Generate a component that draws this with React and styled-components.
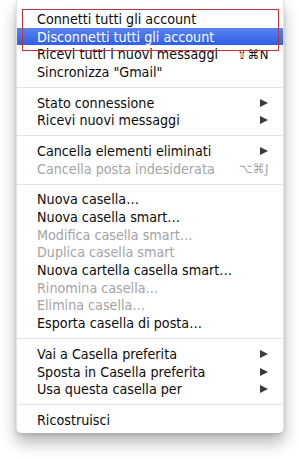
import React from "react";
import styled, { createGlobalStyle } from "styled-components";

const GlobalStyle = createGlobalStyle`
  html, body {
    margin: 0;
    padding: 0;
    background: #ffffff;
  }
  body {
    font-family: "Lucida Grande", "DejaVu Sans Condensed", "DejaVu Sans", sans-serif;
  }
`;

const groups = [
  [
    { label: "Connetti tutti gli account" },
    { label: "Disconnetti tutti gli account", active: true },
    { label: "Ricevi tutti i nuovi messaggi", shortcut: "⇧⌘N" },
    { label: 'Sincronizza "Gmail"' },
  ],
  [
    { label: "Stato connessione", submenu: true },
    { label: "Ricevi nuovi messaggi", submenu: true },
  ],
  [
    { label: "Cancella elementi eliminati", submenu: true },
    { label: "Cancella posta indesiderata", shortcut: "⌥⌘J", disabled: true },
  ],
  [
    { label: "Nuova casella…" },
    { label: "Nuova casella smart…" },
    { label: "Modifica casella smart…", disabled: true },
    { label: "Duplica casella smart", disabled: true },
    { label: "Nuova cartella casella smart…" },
    { label: "Rinomina casella…", disabled: true },
    { label: "Elimina casella…", disabled: true },
    { label: "Esporta casella di posta…" },
  ],
  [
    { label: "Vai a Casella preferita", submenu: true },
    { label: "Sposta in Casella preferita", submenu: true },
    { label: "Usa questa casella per", submenu: true },
  ],
  [{ label: "Ricostruisci" }],
];

export default function App() {
  return (
    <>
      <GlobalStyle />
      <Stage>
        <Menu>
          {groups.map((group, gi) => (
            <React.Fragment key={gi}>
              {gi > 0 && <Separator />}
              {group.map((item) => (
                <Row
                  key={item.label}
                  $active={item.active}
                  $disabled={item.disabled}
                >
                  <Label>{item.label}</Label>
                  {item.shortcut && <Shortcut>{item.shortcut}</Shortcut>}
                  {item.submenu && <Arrow $active={item.active} />}
                </Row>
              ))}
            </React.Fragment>
          ))}
          <Callout />
        </Menu>
      </Stage>
    </>
  );
}

const Stage = styled.div`
  width: 300px;
  height: 459px;
  padding: 0 16px;
  box-sizing: border-box;
  overflow: hidden;
`;

const Menu = styled.div`
  position: relative;
  background: #ffffff;
  padding: 10px 0 4px;
  border-radius: 0 0 5px 5px;
  border-left: 1px solid #e2e2e2;
  border-right: 1px solid #e2e2e2;
  box-shadow: 0 10px 16px rgba(0, 0, 0, 0.28), 0 2px 4px rgba(0, 0, 0, 0.12);
`;

const Row = styled.div`
  display: flex;
  align-items: center;
  height: 17.7px;
  padding: 0 14px 0 20px;
  font-size: 14.2px;
  color: ${(p) => (p.$active ? "#ffffff" : p.$disabled ? "#a3a3a3" : "#0c0c0c")};
  background: ${(p) =>
    p.$active ? "linear-gradient(#5b84f0, #2f5fe6)" : "transparent"};
  white-space: nowrap;
`;

const Label = styled.span`
  flex: 1;
`;

const Shortcut = styled.span`
  font-size: 13px;
  letter-spacing: 0.5px;
`;

const Arrow = styled.span`
  width: 0;
  height: 0;
  margin-right: 1px;
  border-top: 4.5px solid transparent;
  border-bottom: 4.5px solid transparent;
  border-left: 8px solid ${(p) => (p.$active ? "#ffffff" : "#3a3a3a")};
`;

const Separator = styled.div`
  height: 1px;
  margin: 6px 0;
  background: #e3e3e3;
`;

const Callout = styled.div`
  position: absolute;
  left: 5px;
  right: 4px;
  top: 9px;
  height: 40px;
  border: 1.5px solid #b8353c;
  pointer-events: none;
`;
